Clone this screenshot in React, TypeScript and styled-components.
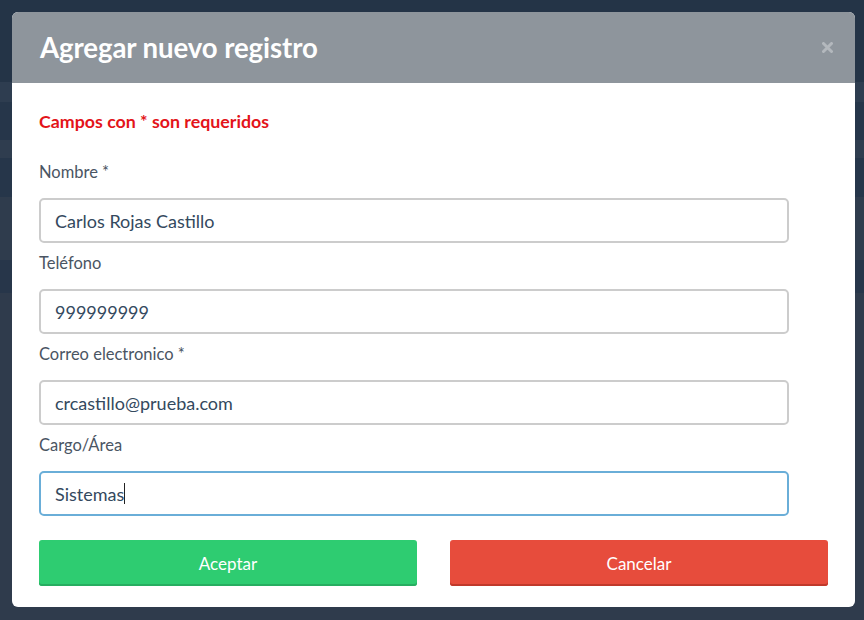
import React from 'react';
import styled, { createGlobalStyle } from 'styled-components';

const GlobalStyle = createGlobalStyle`
  html, body {
    margin: 0;
    padding: 0;
    background: #2f3b4c;
    font-family: Lato, "Open Sans", sans-serif;
  }
`;

const Page = styled.div`
  position: relative;
  width: 864px;
  height: 620px;
  overflow: hidden;
  background: #2f3b4c;
`;

const Band = styled.div<{ $h: number; $bg: string }>`
  height: ${p => p.$h}px;
  background: ${p => p.$bg};
`;

const Modal = styled.div`
  position: absolute;
  left: 12px;
  top: 12px;
  width: 843px;
  height: 595px;
  background: #fff;
  border-radius: 6px;
  display: flex;
  flex-direction: column;
  overflow: hidden;
`;

const Header = styled.div`
  height: 71px;
  background: #8e959c;
  display: flex;
  align-items: center;
  justify-content: space-between;
  padding: 0 22px 0 28px;
  flex-shrink: 0;
`;

const Title = styled.h2`
  margin: 0;
  color: #fff;
  font-size: 27.6px;
  font-weight: 700;
  letter-spacing: -0.1px;
`;

const Close = styled.button`
  border: 0;
  background: none;
  padding: 0;
  display: flex;
  cursor: pointer;
`;

const Body = styled.div`
  padding: 27px 27px 0;
  display: flex;
  flex-direction: column;
`;

const Required = styled.div`
  color: #e3141a;
  font-size: 17.8px;
  font-weight: 700;
  line-height: 22px;
  margin-bottom: 29px;
`;

const Label = styled.div`
  color: #4a5563;
  font-size: 16.5px;
  line-height: 22px;
  margin-bottom: 15px;
`;

const Field = styled.div<{ $focused?: boolean }>`
  box-sizing: border-box;
  width: 750px;
  height: 45px;
  border: 2px solid ${p => (p.$focused ? '#6aaed8' : '#cccccc')};
  border-radius: 5px;
  padding: 0 14px;
  display: flex;
  align-items: center;
  color: #34495e;
  font-size: 18px;
  margin-bottom: 9px;
`;

const Caret = styled.span`
  display: inline-block;
  width: 1px;
  height: 21px;
  background: #222;
`;

const Actions = styled.div`
  display: grid;
  grid-template-columns: 1fr 1fr;
  gap: 33px;
  margin-top: 15px;
`;

const Button = styled.button<{ $color: string; $shade: string }>`
  height: 46px;
  border: 0;
  border-radius: 3px;
  background: ${p => p.$color};
  box-shadow: inset 0 -2px 0 ${p => p.$shade};
  color: #fff;
  font-family: Lato, sans-serif;
  font-size: 17px;
  cursor: pointer;
`;

const fields = [
  { label: 'Nombre *', value: 'Carlos Rojas Castillo' },
  { label: 'Teléfono', value: '999999999' },
  { label: 'Correo electronico *', value: 'crcastillo@prueba.com' },
  { label: 'Cargo/Área', value: 'Sistemas', focused: true },
];

const bands: [number, string][] = [
  [82, '#243447'],
  [20, '#2e3d50'],
  [38, '#26364a'],
  [18, '#2f3d4f'],
  [39, '#26364a'],
  [63, '#2f3c4d'],
  [33, '#27364a'],
  [327, '#2f3b4c'],
];

export default function App() {
  return (
    <Page>
      <GlobalStyle />
      {bands.map(([h, bg], i) => (
        <Band key={i} $h={h} $bg={bg} />
      ))}
      <Modal>
        <Header>
          <Title>Agregar nuevo registro</Title>
          <Close aria-label='Cerrar'>
            <svg width='11' height='11' viewBox='0 0 11 11'>
              <path d='M1.5 1.5 L9.5 9.5 M9.5 1.5 L1.5 9.5' stroke='#b3b8bd' strokeWidth='3' strokeLinecap='round' />
            </svg>
          </Close>
        </Header>
        <Body>
          <Required>Campos con * son requeridos</Required>
          {fields.map(f => (
            <React.Fragment key={f.label}>
              <Label>{f.label}</Label>
              <Field $focused={f.focused}>
                {f.value}
                {f.focused && <Caret />}
              </Field>
            </React.Fragment>
          ))}
          <Actions>
            <Button $color='#2ecc71' $shade='#27ad60'>Aceptar</Button>
            <Button $color='#e74c3c' $shade='#c0392b'>Cancelar</Button>
          </Actions>
        </Body>
      </Modal>
    </Page>
  );
}
